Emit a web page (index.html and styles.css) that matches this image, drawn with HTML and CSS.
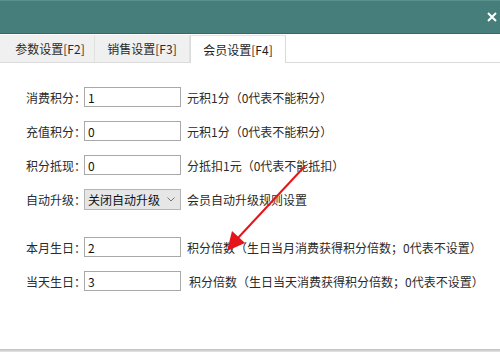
FILE: index.html
```html
<!DOCTYPE html>
<html lang="zh">
<head>
<meta charset="utf-8">
<link rel="stylesheet" href="styles.css">
</head>
<body>
<div class="window">
  <div class="titlebar">
    <svg class="close" width="10" height="10" viewBox="0 0 10 10"><path d="M1 1L9 9M9 1L1 9" stroke="#fff" stroke-width="2" fill="none"/></svg>
  </div>
  <div class="tabs">
    <div class="tab first">参数设置[F2]</div>
    <div class="tab">销售设置[F3]</div>
    <div class="tab active">会员设置[F4]</div>
  </div>
  <div class="content">
    <div class="row">
      <span class="label">消费积分：</span>
      <div class="input">1</div>
      <span class="note">元积1分（0代表不能积分）</span>
    </div>
    <div class="row">
      <span class="label">充值积分：</span>
      <div class="input">0</div>
      <span class="note">元积1分（0代表不能积分）</span>
    </div>
    <div class="row">
      <span class="label">积分抵现：</span>
      <div class="input">0</div>
      <span class="note">分抵扣1元（0代表不能抵扣）</span>
    </div>
    <div class="row">
      <span class="label">自动升级：</span>
      <div class="select"><span>关闭自动升级</span>
        <svg class="chev" width="8" height="5" viewBox="0 0 8 5"><path d="M0.5 0.5L4 4L7.5 0.5" stroke="#777" stroke-width="1" fill="none"/></svg>
      </div>
      <span class="note">会员自动升级规则设置</span>
    </div>
    <div class="row spaced">
      <span class="label">本月生日：</span>
      <div class="input">2</div>
      <span class="note">积分倍数（生日当月消费获得积分倍数；0代表不设置）</span>
    </div>
    <div class="row">
      <span class="label">当天生日：</span>
      <div class="input">3</div>
      <span class="note shift">积分倍数（生日当天消费获得积分倍数；0代表不设置）</span>
    </div>
  </div>
  <div class="footer"></div>
  <svg class="arrow" width="500" height="352" viewBox="0 0 500 352">
    <line x1="305" y1="166" x2="237" y2="239" stroke="#e3151b" stroke-width="2"/>
    <polygon points="227,251 232,231 245,243" fill="#e3151b"/>
  </svg>
</div>
</body>
</html>
```

FILE: styles.css
```css
html, body {
  margin: 0;
  padding: 0;
  background: #fff;
}
.window {
  position: relative;
  width: 500px;
  height: 352px;
  overflow: hidden;
  font-family: "Noto Sans CJK SC", "Noto Sans", sans-serif;
  font-size: 12px;
  color: #1e1e1e;
  display: flex;
  flex-direction: column;
}
.titlebar {
  height: 34px;
  flex: none;
  background: #457e7a;
  border-top: 1px solid #5b918c;
  border-bottom: 1px solid #4d5f5d;
  box-sizing: border-box;
  display: flex;
  align-items: center;
  justify-content: flex-end;
  padding-right: 3px;
}
.close {
  display: block;
}
.tabs {
  height: 28px;
  flex: none;
  display: flex;
  border-bottom: 1px solid #dadada;
  box-sizing: border-box;
  margin-top: 1px;
}
.tab {
  width: 94px;
  background: #f0f0f0;
  border-right: 1px solid #e2e2e2;
  display: flex;
  align-items: center;
  justify-content: center;
  color: #2a2a2a;
  line-height: 1;
}
.tab.first {
  padding-left: 6px;
  width: 88px;
}
.tab.active {
  background: #fff;
  border-left: 1px solid #dadada;
  border-right: 1px solid #dadada;
  border-top: 1px solid #e4e4e4;
  margin-bottom: -1px;
  color: #1e1e1e;
}
.content {
  flex: 1;
  display: flex;
  flex-direction: column;
  gap: 14px;
  padding: 24px 0 0 26px;
}
.row {
  display: flex;
  align-items: center;
  height: 20px;
}
.row.spaced {
  margin-top: 14px;
}
.label {
  width: 58px;
  white-space: nowrap;
  flex: none;
  color: #2a2a2a;
}
.input {
  width: 97px;
  height: 20px;
  box-sizing: border-box;
  border: 1px solid #a9a9a9;
  background: #fff;
  padding-left: 3px;
  display: flex;
  align-items: center;
  color: #111;
  flex: none;
}
.select {
  width: 97px;
  height: 21px;
  box-sizing: border-box;
  border: 1px solid #b5b5b5;
  background: #e6e6e6;
  padding: 0 5px 0 3px;
  display: flex;
  align-items: center;
  justify-content: space-between;
  color: #111;
  flex: none;
}
.chev {
  display: block;
}
.note {
  margin-left: 6px;
  white-space: nowrap;
  color: #2a2a2a;
}
.note.shift {
  margin-left: 8px;
}
.footer {
  height: 3px;
  flex: none;
  background: linear-gradient(#bdbdbd, #e6e6e6);
}
.arrow {
  position: absolute;
  left: 0;
  top: 0;
  pointer-events: none;
}
```
